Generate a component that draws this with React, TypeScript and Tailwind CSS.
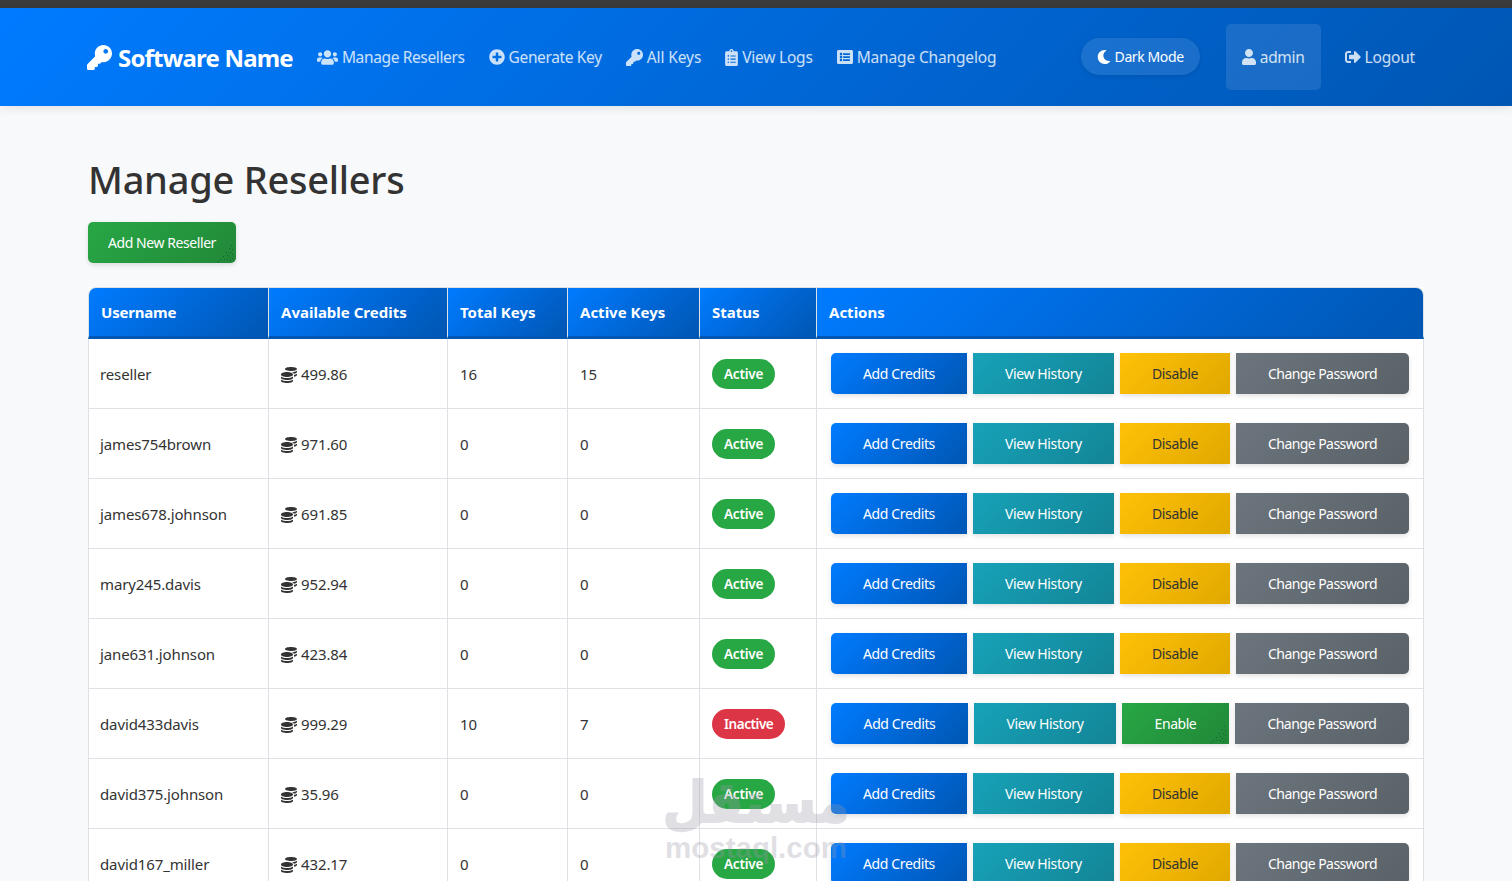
import React from "react";
import { FaKey, FaUsers, FaPlusCircle, FaClipboardList, FaListAlt, FaMoon, FaUser, FaSignOutAlt, FaCoins } from "react-icons/fa";

const font = { fontFamily: '"Noto Sans", "Open Sans", sans-serif' };

const rows = [
  { u: "reseller", c: "499.86", t: "16", a: "15", on: true },
  { u: "james754brown", c: "971.60", t: "0", a: "0", on: true },
  { u: "james678.johnson", c: "691.85", t: "0", a: "0", on: true },
  { u: "mary245.davis", c: "952.94", t: "0", a: "0", on: true },
  { u: "jane631.johnson", c: "423.84", t: "0", a: "0", on: true },
  { u: "david433davis", c: "999.29", t: "10", a: "7", on: false },
  { u: "david375.johnson", c: "35.96", t: "0", a: "0", on: true },
  { u: "david167_miller", c: "432.17", t: "0", a: "0", on: true },
];

function Dots() {
  return (
    <svg className="absolute right-[2px] bottom-[1px]" width="20" height="18" viewBox="0 0 20 18" fill="#17602e">
      {[[17,1],[15,4],[18,5],[12,8],[16,8],[18,10],[9,12],[13,11],[15,13],[18,14],[6,15],[10,15],[13,15],[16,16],[4,17]].map(([x, y], i) => (
        <rect key={i} x={x} y={y} width="1" height="1" />
      ))}
    </svg>
  );
}

function NavLink({ icon, children, cls = "tracking-[-0.36px]" }: { icon: React.ReactNode; children: React.ReactNode; cls?: string }) {
  return (
    <a className={"flex items-center gap-[4px] text-[15.5px] text-white/80 whitespace-nowrap " + cls}>
      {icon}
      <span className="pt-[2px]">{children}</span>
    </a>
  );
}

const btn = "relative flex-auto h-[41px] px-8 text-[14px] whitespace-nowrap shadow-[0_2px_5px_rgba(0,0,0,0.12)] flex items-center justify-center";

export default function App() {
  return (
    <div className="relative h-[881px] overflow-hidden bg-[#f8f9fa] text-[#333]" style={font}>
      <div className="h-2 bg-[#3b3b3b]" />
      <nav className="relative h-[98px] flex items-center pl-[87px] pr-[97px] bg-[linear-gradient(135deg,#007bff,#0056b3)] shadow-[0_2px_10px_rgba(0,0,0,0.1)]">
        <a className="flex items-center gap-[6px] text-[24px] font-bold tracking-[-0.8px] text-white mr-6 whitespace-nowrap">
          <FaKey className="w-[25px] h-[25px]" />
          <span className="pt-[2px]">Software Name</span>
        </a>
        <div className="flex items-center gap-6">
          <NavLink icon={<FaUsers className="w-[21px] h-[17px]" />}>Manage Resellers</NavLink>
          <NavLink icon={<FaPlusCircle className="w-[16px] h-[16px]" />}>Generate Key</NavLink>
          <NavLink cls="tracking-[-0.1px]" icon={<FaKey className="w-[17px] h-[17px]" />}>All Keys</NavLink>
          <NavLink cls="tracking-[-0.22px]" icon={<FaClipboardList className="w-[13px] h-[17px]" />}>View Logs</NavLink>
          <NavLink cls="tracking-[-0.15px]" icon={<FaListAlt className="w-[16px] h-[16px]" />}>Manage Changelog</NavLink>
        </div>
        <div className="ml-auto flex items-center">
          <button className="mb-[1px] h-[37px] w-[119px] rounded-full bg-white/10 shadow-[0_2px_5px_rgba(0,0,0,0.1)] flex items-center justify-center gap-[4px] text-[14px] tracking-[-0.4px] text-white">
            <FaMoon className="w-[14px] h-[14px]" />
            Dark Mode
          </button>
          <div className="ml-[26px]">
            <a className="h-[66px] w-[95px] rounded-[5px] bg-white/10 flex items-center justify-center">
              <NavLink icon={<FaUser className="w-[14px] h-[16px]" />}>admin</NavLink>
            </a>
          </div>
          <div className="ml-6">
            <NavLink cls="tracking-[-0.2px]" icon={<FaSignOutAlt className="w-[16px] h-[16px]" />}>Logout</NavLink>
          </div>
        </div>
      </nav>

      <main className="px-[88px] pt-12">
        <h1 className="h-[52px] leading-[50px] text-[38px] font-medium tracking-[-0.25px] text-[#333]">Manage Resellers</h1>
        <button className="relative mt-4 h-[41px] w-[148px] rounded-[5px] bg-[linear-gradient(135deg,#28a745,#218838)] text-white text-[14px] tracking-[-0.43px] shadow-[0_2px_5px_rgba(0,0,0,0.12)] overflow-hidden">
          Add New Reseller
          <Dots />
        </button>

        <table className="mt-6 w-[1336px] table-fixed border-separate border-spacing-0 bg-white">
          <colgroup>
            <col className="w-[181px]" />
            <col className="w-[179px]" />
            <col className="w-[120px]" />
            <col className="w-[132px]" />
            <col className="w-[117px]" />
            <col className="w-[607px]" />
          </colgroup>
          <thead>
            <tr className="h-[52px] text-left text-white text-[15px] font-bold">
              {["Username", "Available Credits", "Total Keys", "Active Keys", "Status", "Actions"].map((h, i) => (
                <th
                  key={h}
                  className={
                    "pl-3 pt-[1px] border-t border-t-[#dee2e6] border-b-[3px] border-b-[#0056b3] bg-[linear-gradient(135deg,#007bff,#0056b3)] " +
                    (i === 0 ? "tracking-[-0.2px] rounded-tl-[8px] border-l border-l-[#dee2e6] " : "tracking-[0px] ") +
                    (i === 5 ? "rounded-tr-[8px] border-r border-r-[#dee2e6]" : "border-r border-r-[#dee2e6]")
                  }
                >
                  {h}
                </th>
              ))}
            </tr>
          </thead>
          <tbody className="text-[15px] tracking-[-0.12px] text-[#333]">
            {rows.map((r) => (
              <tr key={r.u} className="h-[70px]">
                <td className="pl-[11px] pt-[2px] border-l border-r border-b border-[#dee2e6]">{r.u}</td>
                <td className="pl-3 pt-[2px] border-r border-b border-[#dee2e6]">
                  <span className="flex items-center gap-[4px]">
                    <FaCoins className="w-[16px] h-[16px]" />
                    {r.c}
                  </span>
                </td>
                <td className="pl-3 pt-[2px] border-r border-b border-[#dee2e6]">{r.t}</td>
                <td className="pl-3 pt-[2px] border-r border-b border-[#dee2e6]">{r.a}</td>
                <td className="pl-3 border-r border-b border-[#dee2e6]">
                  <span className={"inline-flex items-center h-[30px] px-3 pt-[1px] rounded-full text-white text-[13.5px] font-semibold " + (r.on ? "tracking-[-0.2px] bg-[#28a745]" : "tracking-[-0.45px] bg-[#dc3545]")}>
                    {r.on ? "Active" : "Inactive"}
                  </span>
                </td>
                <td className="pl-[14px] pr-[14px] border-r border-b border-[#dee2e6]">
                  <div className="flex gap-[6px]">
                    <button className={btn + " tracking-[-0.38px] rounded-l-[5px] text-white bg-[linear-gradient(135deg,#007bff,#0056b3)]"}>Add Credits</button>
                    <button className={btn + " tracking-[-0.38px] text-white bg-[linear-gradient(135deg,#17a2b8,#138496)]"}>View History</button>
                    {r.on ? (
                      <button className={btn + " tracking-[-0.35px] text-[#333] bg-[linear-gradient(135deg,#ffc107,#e0a800)]"}>Disable</button>
                    ) : (
                      <button className={btn + " tracking-[-0.45px] text-white bg-[linear-gradient(135deg,#28a745,#218838)]"}>Enable<Dots /></button>
                    )}
                    <button className={btn + " tracking-[-0.57px] rounded-r-[5px] text-white bg-[linear-gradient(135deg,#6c757d,#5a6268)]"}>Change Password</button>
                  </div>
                </td>
              </tr>
            ))}
          </tbody>
        </table>
      </main>

      <div className="absolute left-[665px] top-[770px] w-[182px] flex flex-col items-center text-[#9a98a8] opacity-30 pointer-events-none">
        <span className="text-[51px] leading-[66px] font-bold scale-y-110 [-webkit-text-stroke:2px_#9a98a8]" style={{ fontFamily: '"DejaVu Sans", sans-serif' }} dir="rtl">مستقل</span>
        <span className="-mt-1 text-[29.5px] leading-[32px] font-bold whitespace-nowrap" style={{ fontFamily: '"Liberation Sans", sans-serif' }}>mostaql.com</span>
      </div>
    </div>
  );
}
